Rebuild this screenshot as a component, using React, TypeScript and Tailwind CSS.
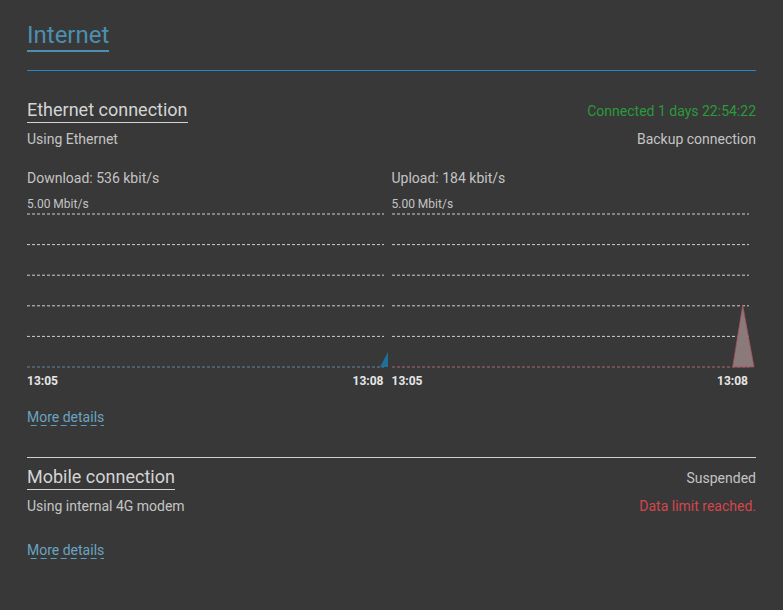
import React from 'react';

const GRID_Y = [2, 32.6, 63.2, 93.8, 124.4, 155];

interface ChartProps {
  label: string;
  rate: string;
  baseColor: string;
  children: React.ReactNode;
}

const Chart = ({ label, rate, baseColor, children }: ChartProps) => (
  <div className="pr-2">
    <div className="text-[14px] leading-5 text-[#c4c4c4]">{label}</div>
    <div className="mt-2 text-[12px] leading-4 text-[#c4c4c4]">{rate}</div>
    <svg width="357" height="160" className="block overflow-visible">
      {GRID_Y.slice(0, 5).map((y) => (
        <line key={y} x1="0" x2="357" y1={y} y2={y} stroke="#cfcfcf" strokeWidth="1" strokeDasharray="3 2" />
      ))}
      <line x1="0" x2="357" y1="155" y2="155" stroke={baseColor} strokeWidth="1" strokeDasharray="3 2" />
      {children}
    </svg>
    <div className="mt-px flex justify-between text-[12px] font-bold leading-4 text-[#e6e6e6]">
      <span>13:05</span>
      <span>13:08</span>
    </div>
  </div>
);

const MoreDetails = () => (
  <a
    href="#"
    className="inline-block bg-[linear-gradient(to_right,#5d9dbd_60%,transparent_0)] bg-[length:10px_1px] bg-bottom bg-repeat-x text-[14px] leading-[18px] text-[#6ba4c0]"
  >
    More details
  </a>
);

export default function App() {
  return (
    <div className="min-h-[610px] bg-[#383838] px-[27px] font-['Roboto',sans-serif]">
      {/* Page title */}
      <div className="pt-[21px]">
        <h1 className="inline-block border-b-2 border-[#4d8fb0] pb-px text-[24px] leading-[28px] text-[#4d8fb0]">
          Internet
        </h1>
      </div>
      <div className="mt-[18px] h-px w-full bg-[#1a8ccc]" />

      {/* Ethernet */}
      <section className="mt-[28px]">
        <div className="flex items-baseline justify-between">
          <h2 className="border-b border-[#d4d4d4] pb-px text-[18px] leading-[22px] text-[#d4d4d4]">
            Ethernet connection
          </h2>
          <span className="text-[14px] text-[#2b9a3c]">Connected 1 days 22:54:22</span>
        </div>
        <div className="mt-[6px] flex justify-between text-[14px] leading-5 text-[#c4c4c4]">
          <span>Using Ethernet</span>
          <span>Backup connection</span>
        </div>

        <div className="mt-[19px] grid grid-cols-2">
          <Chart label="Download: 536 kbit/s" rate="5.00 Mbit/s" baseColor="#5f86a0">
            <polygon points="353,155 361,140 361,155" fill="#1f6e9c" />
          </Chart>
          <Chart label="Upload: 184 kbit/s" rate="5.00 Mbit/s" baseColor="#a86a6e">
            <polygon
              points="340.7,155 350.7,93.3 362,155"
              fill="#8a7a7c"
              stroke="#a8525a"
              strokeWidth="0.8"
            />
          </Chart>
        </div>

        <div className="mt-[16px]">
          <MoreDetails />
        </div>
      </section>

      <div className="mt-[28px] h-px w-full bg-[#d0d0d0]" />

      {/* Mobile */}
      <section className="mt-[8px]">
        <div className="flex items-baseline justify-between">
          <h2 className="border-b border-[#d4d4d4] pb-px text-[18px] leading-[22px] text-[#d4d4d4]">
            Mobile connection
          </h2>
          <span className="text-[14px] text-[#c4c4c4]">Suspended</span>
        </div>
        <div className="mt-[6px] flex justify-between text-[14px] leading-5 text-[#c4c4c4]">
          <span>Using internal 4G modem</span>
          <span className="text-[#d2474c]">Data limit reached.</span>
        </div>
        <div className="mt-[22px]">
          <MoreDetails />
        </div>
      </section>
    </div>
  );
}
